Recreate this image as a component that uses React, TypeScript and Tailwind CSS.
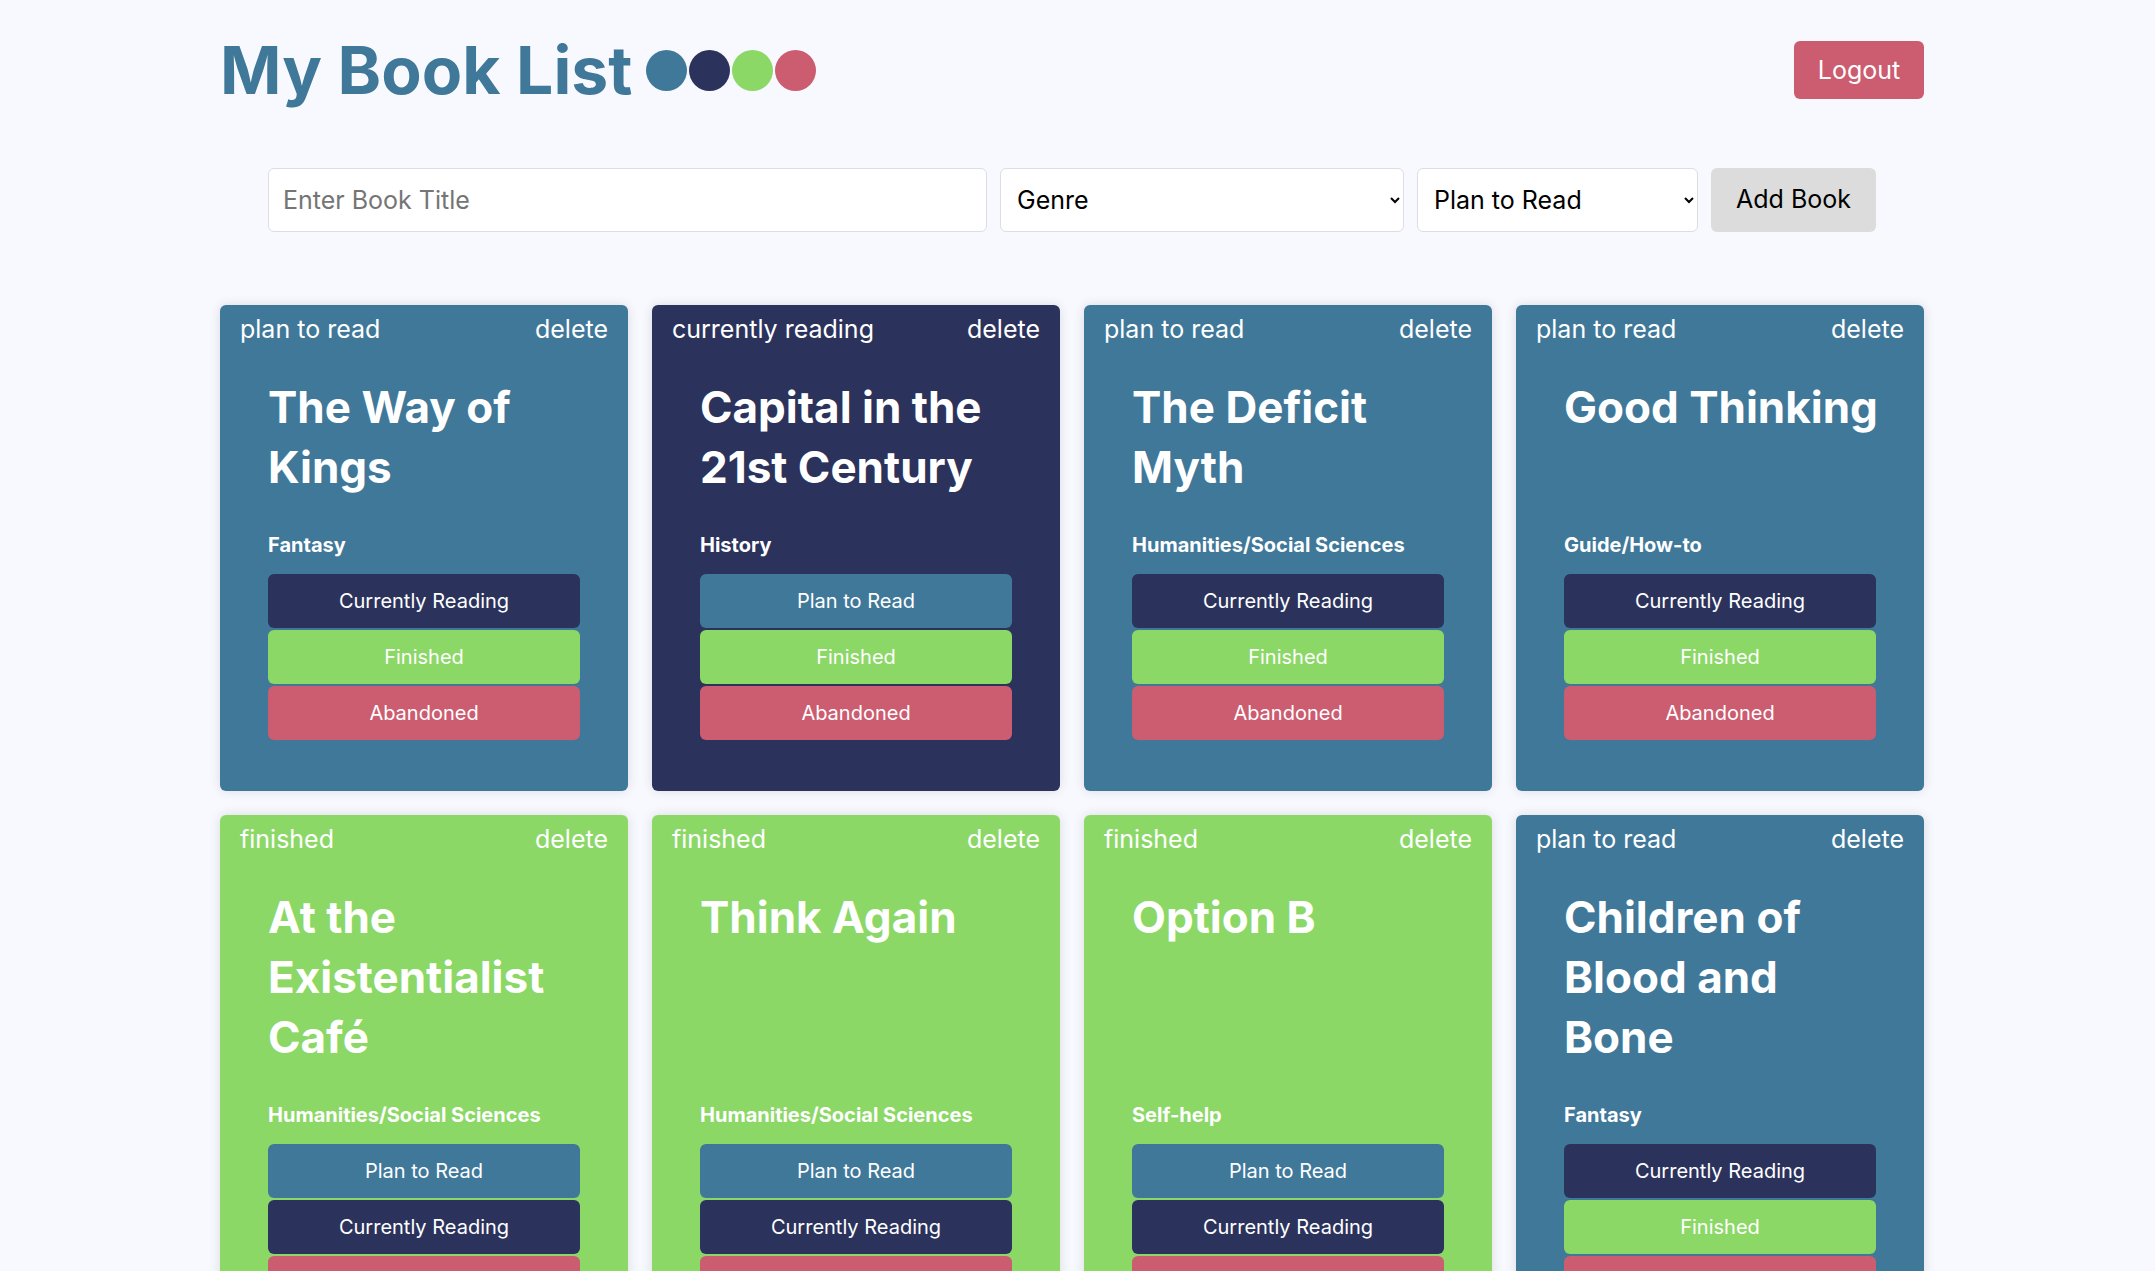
import React from "react";

type Status = "plan to read" | "currently reading" | "finished";

type Book = {
    title: string;
    genre: string;
    status: Status;
};

// titles keep the line breaks the layout shows
const books: Book[] = [
    { title: "The Way of\nKings", genre: "Fantasy", status: "plan to read" },
    { title: "Capital in the\n21st Century", genre: "History", status: "currently reading" },
    { title: "The Deficit\nMyth", genre: "Humanities/Social Sciences", status: "plan to read" },
    { title: "Good Thinking", genre: "Guide/How-to", status: "plan to read" },
    { title: "At the\nExistentialist\nCafé", genre: "Humanities/Social Sciences", status: "finished" },
    { title: "Think Again", genre: "Humanities/Social Sciences", status: "finished" },
    { title: "Option B", genre: "Self-help", status: "finished" },
    { title: "Children of\nBlood and\nBone", genre: "Fantasy", status: "plan to read" },
];

const cardBg: Record<Status, string> = {
    "plan to read": "bg-[#40789a]",
    "currently reading": "bg-[#2b335d]",
    finished: "bg-[#8bd867]",
};

const actions = [
    { label: "Plan to Read", status: "plan to read", className: "bg-[#40789a]" },
    { label: "Currently Reading", status: "currently reading", className: "bg-[#2b335d]" },
    { label: "Finished", status: "finished", className: "bg-[#8bd867]" },
    { label: "Abandoned", status: "abandoned", className: "bg-[#cc5c6f]" },
];

function BookCard({ book }: { book: Book }) {
    return (
        <div className={`${cardBg[book.status]} flex flex-col rounded-md pt-[8px] pb-[51px] text-white shadow-[0_0_12px_rgba(0,0,0,0.12)]`}>
            <div className="flex justify-between px-5 text-[25px] leading-[32px]">
                <span>{book.status}</span>
                <button className="cursor-pointer">delete</button>
            </div>
            <div className="flex flex-1 flex-col px-12">
                <h2 className="mt-[32px] flex-1 whitespace-pre text-[44px] font-bold leading-[60px]">{book.title}</h2>
                <p className="mt-[34px] text-[20px] font-bold leading-[28px]">{book.genre}</p>
                <div className="mt-[15px] flex flex-col gap-[2px]">
                    {actions
                        .filter((a) => a.status !== book.status)
                        .map((a) => (
                            <button
                                key={a.label}
                                className={`${a.className} h-[54px] w-full rounded-md text-[20px] text-white`}
                            >
                                {a.label}
                            </button>
                        ))}
                </div>
            </div>
        </div>
    );
}

export default function App() {
    return (
        <div className="min-h-screen bg-[#f8f9fe] pt-[41px] font-['Inter',sans-serif]">
            <div className="ml-[220px] w-[1704px] pb-16">
                <header className="flex h-[58px] items-center justify-between">
                    <div className="flex items-center">
                        <h1 className="text-[66px] font-bold leading-none text-[#40789a]">My Book List</h1>
                        <div className="ml-[14px] flex gap-[2px]">
                            <span className="h-[41px] w-[41px] rounded-full bg-[#40789a]" />
                            <span className="h-[41px] w-[41px] rounded-full bg-[#2b335d]" />
                            <span className="h-[41px] w-[41px] rounded-full bg-[#8bd867]" />
                            <span className="h-[41px] w-[41px] rounded-full bg-[#cc5c6f]" />
                        </div>
                    </div>
                    <button className="h-[58px] w-[130px] rounded-md bg-[#cc5c6f] pt-[2px] text-[25px] text-white">Logout</button>
                </header>

                <form className="mt-[69px] flex justify-center gap-[13px]" onSubmit={(e) => e.preventDefault()}>
                    <input
                        type="text"
                        placeholder="Enter Book Title"
                        className="h-[64px] w-[719px] rounded-md border border-[#dddde3] bg-white px-[14px] text-[25px] text-black placeholder:text-[#757575] outline-none"
                    />
                    <select className="h-[64px] w-[404px] rounded-md border border-[#dddde3] bg-white px-[12px] text-[25px] text-black">
                        <option>Genre</option>
                        <option>Fantasy</option>
                        <option>History</option>
                        <option>Self-help</option>
                    </select>
                    <select className="h-[64px] w-[281px] rounded-md border border-[#dddde3] bg-white px-[12px] text-[25px] text-black">
                        <option>Plan to Read</option>
                        <option>Currently Reading</option>
                        <option>Finished</option>
                    </select>
                    <button className="h-[64px] w-[165px] rounded-md bg-[#dcdcdc] text-[25px] text-black">Add Book</button>
                </form>

                <div className="mt-[73px] grid grid-cols-4 gap-6">
                    {books.map((b) => (
                        <BookCard key={b.title} book={b} />
                    ))}
                </div>
            </div>
        </div>
    );
}
